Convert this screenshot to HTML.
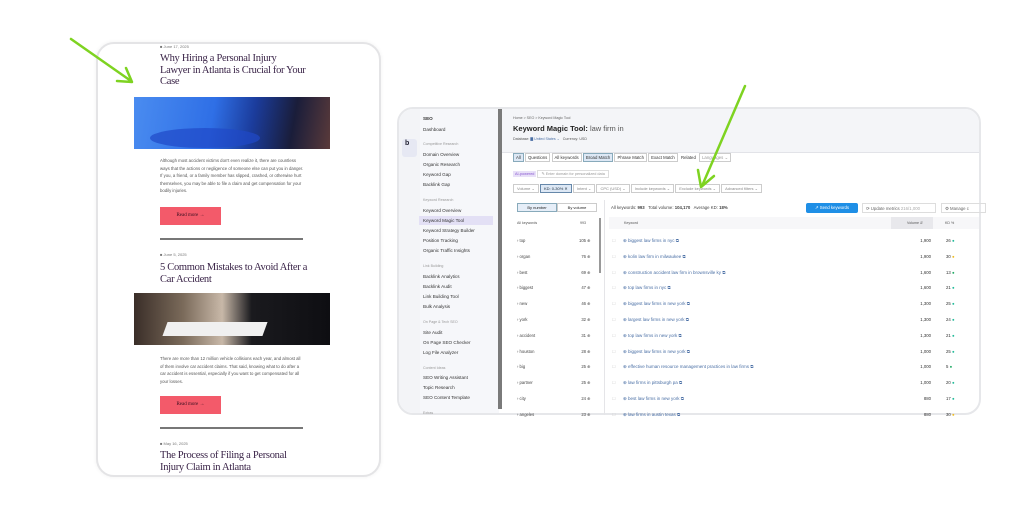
<!DOCTYPE html>
<html><head><meta charset="utf-8"><style>
*{margin:0;padding:0;box-sizing:border-box}
body{width:1024px;height:512px;background:#fff;position:relative;overflow:hidden;font-family:"Liberation Sans",sans-serif;color:#222}
.a{position:absolute;white-space:nowrap}
.card{position:absolute;left:96px;top:42px;width:285px;height:435px;border:2px solid #e4e4e6;border-radius:18px;background:#fff;box-shadow:0 0 4px rgba(0,0,0,.06)}
.h{font-family:"Liberation Serif",serif;color:#3a2448;font-size:10.5px;line-height:11.5px;white-space:normal;letter-spacing:-0.3px}
.d{font-size:4px;color:#777}
.p{font-size:4.3px;line-height:7.6px;color:#555;white-space:normal;width:145px}
.btn{background:#f35a6a;width:61px;height:18px;font-family:"Liberation Serif",serif;font-size:5px;color:#3a1020;text-align:center;line-height:18px}
.hr{height:2px;background:#777;width:143px}
.s{font-size:4.6px;color:#333}
.sm{font-size:3.6px;color:#999}
.r{font-size:4.5px;color:#4a6fa5}
.n{font-size:4.3px;color:#333}
</style></head><body>

<div class="card"></div>
<div class="a d" style="left:160px;top:44px">■ June 17, 2025</div>
<div class="a h" style="left:160px;top:53px;width:146px">Why Hiring a Personal Injury Lawyer in Atlanta is Crucial for Your Case</div>
<div class="a" style="left:134px;top:97px;width:196px;height:52px;background:linear-gradient(100deg,#4a8cf0 0%,#2f6fe6 40%,#1b3c9c 60%,#1a1d3a 80%,#5a3a3a 100%)"></div>
<div class="a" style="left:150px;top:128px;width:110px;height:20px;background:#1f49c8;border-radius:50%;opacity:.7"></div>
<div class="a p" style="left:160px;top:157px">Although most accident victims don't even realize it, there are countless ways that the actions or negligence of someone else can put you in danger. If you, a friend, or a family member has slipped, crashed, or otherwise hurt themselves, you may be able to file a claim and get compensation for your bodily injuries.</div>
<div class="a btn" style="left:160px;top:207px">Read more →</div>
<div class="a hr" style="left:160px;top:238px"></div>
<div class="a d" style="left:160px;top:252px">■ June 5, 2025</div>
<div class="a h" style="left:160px;top:262px;width:150px">5 Common Mistakes to Avoid After a Car Accident</div>
<div class="a" style="left:134px;top:293px;width:196px;height:52px;background:linear-gradient(90deg,#3a2e28 0%,#7a6a5a 25%,#c8b8a8 45%,#1a1a1e 60%,#0e0e12 100%)"></div>
<div class="a" style="left:165px;top:322px;width:100px;height:14px;background:#f0f0f0;transform:skewX(-20deg)"></div>
<div class="a p" style="left:160px;top:355px">There are more than 12 million vehicle collisions each year, and almost all of them involve car accident claims. That said, knowing what to do after a car accident is essential, especially if you want to get compensated for all your losses.</div>
<div class="a btn" style="left:160px;top:396px">Read more →</div>
<div class="a hr" style="left:160px;top:427px"></div>
<div class="a d" style="left:160px;top:441px">■ May 16, 2025</div>
<div class="a h" style="left:160px;top:450px;width:140px">The Process of Filing a Personal Injury Claim in Atlanta</div>

<div class="a" style="left:397px;top:107px;width:584px;height:308px;border:2px solid #e6e7ea;border-radius:16px;background:#fff;overflow:hidden">
 <div class="a" style="left:0;top:0;width:21px;height:308px;background:#f3f4f7"></div>
 <div class="a" style="left:21px;top:0;width:79px;height:308px;background:#f6f7fa"></div>
 <div class="a" style="left:99px;top:0;width:4px;height:300px;background:#7a7a7a"></div>
 <div class="a" style="left:103px;top:0;width:481px;height:43px;background:#f4f5f8"></div>
 <div class="a" style="left:103px;top:43px;width:481px;height:1px;background:#e2e3e8"></div>
 <div class="a" style="left:3px;top:30px;width:15px;height:18px;background:#e6e8f3;border-radius:3px"></div>
 <div class="a" style="left:6px;top:31px;font-size:7px;font-weight:bold;color:#223">b</div>
</div>
<div class="a s" style="left:423px;top:116px;font-weight:bold">SEO</div>
<div class="a s" style="left:423px;top:127px">Dashboard</div>
<div class="a sm" style="left:423px;top:142px">Competitive Research</div>
<div class="a s" style="left:423px;top:152px">Domain Overview</div>
<div class="a s" style="left:423px;top:162px">Organic Research</div>
<div class="a s" style="left:423px;top:172px">Keyword Gap</div>
<div class="a s" style="left:423px;top:182px">Backlink Gap</div>
<div class="a sm" style="left:423px;top:198px">Keyword Research</div>
<div class="a s" style="left:423px;top:208px">Keyword Overview</div>
<div class="a" style="left:419px;top:216px;width:74px;height:9px;background:#e3e0f5"></div>
<div class="a s" style="left:423px;top:218px">Keyword Magic Tool</div>
<div class="a s" style="left:423px;top:228px">Keyword Strategy Builder</div>
<div class="a s" style="left:423px;top:238px">Position Tracking</div>
<div class="a s" style="left:423px;top:248px">Organic Traffic Insights</div>
<div class="a sm" style="left:423px;top:264px">Link Building</div>
<div class="a s" style="left:423px;top:274px">Backlink Analytics</div>
<div class="a s" style="left:423px;top:284px">Backlink Audit</div>
<div class="a s" style="left:423px;top:294px">Link Building Tool</div>
<div class="a s" style="left:423px;top:304px">Bulk Analysis</div>
<div class="a sm" style="left:423px;top:320px">On Page &amp; Tech SEO</div>
<div class="a s" style="left:423px;top:330px">Site Audit</div>
<div class="a s" style="left:423px;top:340px">On Page SEO Checker</div>
<div class="a s" style="left:423px;top:350px">Log File Analyzer</div>
<div class="a sm" style="left:423px;top:366px">Content Ideas</div>
<div class="a s" style="left:423px;top:375px">SEO Writing Assistant</div>
<div class="a s" style="left:423px;top:385px">Topic Research</div>
<div class="a s" style="left:423px;top:395px">SEO Content Template</div>
<div class="a sm" style="left:423px;top:411px">Extras</div>

<div class="a sm" style="left:513px;top:116px;color:#666">Home &gt; SEO &gt; Keyword Magic Tool</div>
<div class="a" style="left:513px;top:124px;font-size:7.5px;font-weight:bold;color:#222">Keyword Magic Tool: <span style="font-weight:normal;color:#555">law firm in</span></div>
<div class="a sm" style="left:513px;top:137px;color:#555">Database: <span style="color:#4a6fa5">▇ United States ⌄</span> &nbsp; Currency: USD</div>
<div class="a" style="left:513px;top:155px;font-size:4.3px;color:#333">
<span style="border:1px solid #8ab;background:#dde8f5;padding:1px 2px">All</span> <span style="border:1px solid #ccc;padding:1px 2px">Questions</span> <span style="border:1px solid #ccc;padding:1px 2px">All keywords</span> <span style="border:1px solid #8ab;background:#dde8f5;padding:1px 2px">Broad Match</span> <span style="border:1px solid #ccc;padding:1px 2px">Phrase Match</span> <span style="border:1px solid #ccc;padding:1px 2px">Exact Match</span> <span style="padding:1px 2px">Related</span> <span style="border:1px solid #ccc;padding:1px 2px;color:#999">Languages ⌄</span></div>
<div class="a" style="left:513px;top:171px;font-size:3.8px;color:#999"><span style="background:#e8e0f8;color:#8a5ad0;padding:1px 2px">AI-powered</span> <span style="border:1px solid #ddd;padding:1px 3px">✎ Enter domain for personalized data</span></div>
<div class="a" style="left:513px;top:186px;font-size:4px;color:#888"><span style="border:1px solid #ccc;padding:1px 3px">Volume ⌄</span> <span style="border:1px solid #68a;background:#dde8f5;color:#234;padding:1px 3px">KD: 0-30% ✕</span> <span style="border:1px solid #ccc;padding:1px 3px">Intent ⌄</span> <span style="border:1px solid #ccc;padding:1px 3px">CPC (USD) ⌄</span> <span style="border:1px solid #ccc;padding:1px 3px">Include keywords ⌄</span> <span style="border:1px solid #ccc;padding:1px 3px">Exclude keywords ⌄</span> <span style="border:1px solid #ccc;padding:1px 3px">Advanced filters ⌄</span></div>

<div class="a" style="left:517px;top:203px;width:40px;height:9px;border:1px solid #8ab;background:#e6eef8;font-size:4px;text-align:center;line-height:8px">By number</div>
<div class="a" style="left:557px;top:203px;width:40px;height:9px;border:1px solid #ccc;font-size:4px;text-align:center;line-height:8px">By volume</div>
<div class="a sm" style="left:517px;top:221px;color:#555">All keywords</div>
<div class="a sm" style="left:580px;top:221px;color:#555">993</div>
<div class="a" style="left:599px;top:218px;width:2px;height:55px;background:#999"></div>
<div class="a" style="left:604px;top:200px;width:1px;height:215px;background:#e5e5e8"></div>

<div class="a" style="left:611px;top:205px;font-size:4.3px;color:#444">All keywords: <b>993</b> &nbsp; Total volume: <b>104,170</b> &nbsp; Average KD: <b>18%</b></div>
<div class="a" style="left:806px;top:203px;width:52px;height:10px;background:#1f8fe6;border-radius:2px;color:#fff;font-size:4.3px;text-align:center;line-height:10px">↗ Send keywords</div>
<div class="a" style="left:862px;top:203px;width:74px;height:10px;border:1px solid #ddd;font-size:4.3px;color:#666;line-height:9px;padding-left:3px">⟳ Update metrics <span style="color:#aaa">216/1,000</span></div>
<div class="a" style="left:941px;top:203px;width:45px;height:10px;border:1px solid #ddd;font-size:4.3px;color:#666;line-height:9px;padding-left:3px">⚙ Manage c</div>
<div class="a" style="left:609px;top:217px;width:370px;height:12px;background:#f7f7f9"></div>
<div class="a" style="left:891px;top:217px;width:42px;height:12px;background:#e8e8ec"></div>
<div class="a sm" style="left:624px;top:221px;color:#555">Keyword</div>
<div class="a sm" style="left:907px;top:221px;color:#555">Volume ⇵</div>
<div class="a sm" style="left:945px;top:221px;color:#555">KD %</div>

<div class="a" style="left:517px;top:233px;line-height:15.8px;font-size:4.2px;color:#444">
› top<br>› organ<br>› best<br>› biggest<br>› new<br>› york<br>› accident<br>› houston<br>› big<br>› partner<br>› city<br>› angeles</div>
<div class="a" style="left:579px;top:233px;line-height:15.8px;font-size:4.2px;color:#444;text-align:right">105 ⊕<br>76 ⊕<br>69 ⊕<br>47 ⊕<br>46 ⊕<br>32 ⊕<br>31 ⊕<br>28 ⊕<br>25 ⊕<br>25 ⊕<br>24 ⊕<br>23 ⊕</div>
<div class="a" style="left:612px;top:233px;line-height:15.8px;font-size:4.2px;color:#ccc">☐<br>☐<br>☐<br>☐<br>☐<br>☐<br>☐<br>☐<br>☐<br>☐<br>☐<br>☐</div>
<div class="a r" style="left:623px;top:233px;line-height:15.8px">⊕ biggest law firms in nyc ⧉<br>⊕ kolin law firm in milwaukee ⧉<br>⊕ construction accident law firm in brownsville ky ⧉<br>⊕ top law firms in nyc ⧉<br>⊕ biggest law firms in new york ⧉<br>⊕ largest law firms in new york ⧉<br>⊕ top law firms in new york ⧉<br>⊕ biggest law firms in new york ⧉<br>⊕ effective human resource management practices in law firms ⧉<br>⊕ law firms in pittsburgh pa ⧉<br>⊕ best law firms in new york ⧉<br>⊕ law firms in austin texas ⧉</div>
<div class="a n" style="left:910px;top:233px;line-height:15.8px;text-align:right;width:21px">1,900<br>1,900<br>1,600<br>1,600<br>1,300<br>1,300<br>1,300<br>1,000<br>1,000<br>1,000<br>880<br>880</div>
<div class="a n" style="left:946px;top:233px;line-height:15.8px">26 <span style="color:#2b9">●</span><br>30 <span style="color:#eb2">●</span><br>13 <span style="color:#2a6">●</span><br>21 <span style="color:#2b9">●</span><br>25 <span style="color:#2b9">●</span><br>24 <span style="color:#2b9">●</span><br>21 <span style="color:#2b9">●</span><br>25 <span style="color:#2b9">●</span><br>5 <span style="color:#2a6">●</span><br>20 <span style="color:#2b9">●</span><br>17 <span style="color:#2b9">●</span><br>30 <span style="color:#eb2">●</span></div>

<svg class="a" style="left:0;top:0" width="1024" height="512"><g stroke="#7ed321" stroke-width="2.5" fill="none" stroke-linecap="round" stroke-linejoin="round"><path d="M71 39 L131 81"/><path d="M117 81 L132 82 L126 68"/><path d="M745 86 L702 186"/><path d="M698 170 L701 187 L714 176"/></g></svg>
</body></html>
